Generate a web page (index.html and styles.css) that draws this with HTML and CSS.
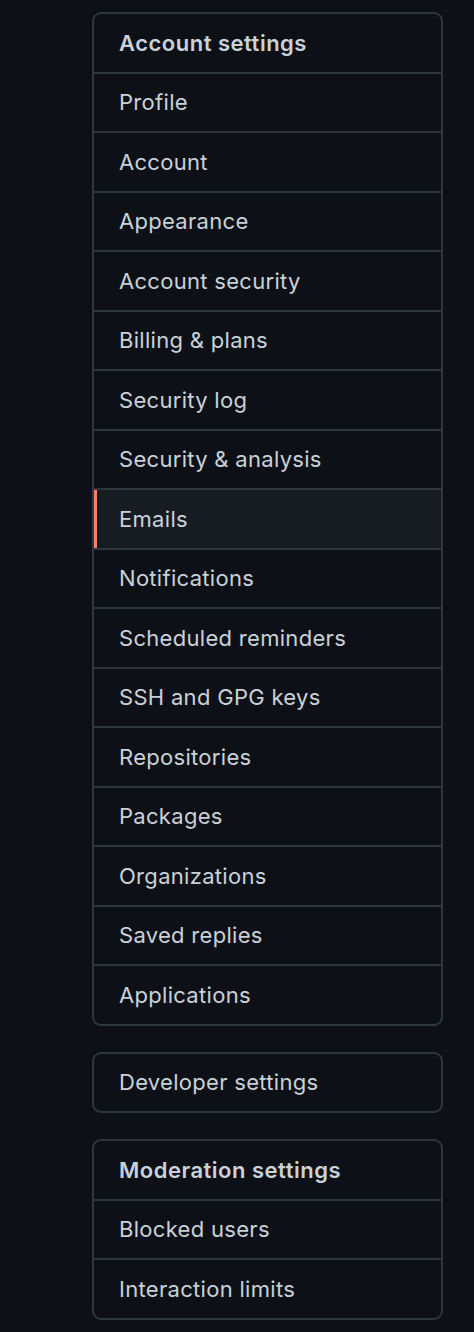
FILE: index.html
```html
<!DOCTYPE html>
<html>
<head>
<meta charset="utf-8">
<link rel="stylesheet" href="styles.css">
</head>
<body>
<div class="sidebar">
  <nav class="menu">
    <div class="menu-heading">Account settings</div>
    <a class="menu-item">Profile</a>
    <a class="menu-item">Account</a>
    <a class="menu-item">Appearance</a>
    <a class="menu-item">Account security</a>
    <a class="menu-item">Billing &amp; plans</a>
    <a class="menu-item">Security log</a>
    <a class="menu-item">Security &amp; analysis</a>
    <a class="menu-item selected">Emails</a>
    <a class="menu-item">Notifications</a>
    <a class="menu-item">Scheduled reminders</a>
    <a class="menu-item">SSH and GPG keys</a>
    <a class="menu-item">Repositories</a>
    <a class="menu-item">Packages</a>
    <a class="menu-item">Organizations</a>
    <a class="menu-item">Saved replies</a>
    <a class="menu-item">Applications</a>
  </nav>
  <nav class="menu">
    <a class="menu-item">Developer settings</a>
  </nav>
  <nav class="menu">
    <div class="menu-heading">Moderation settings</div>
    <a class="menu-item">Blocked users</a>
    <a class="menu-item">Interaction limits</a>
  </nav>
</div>
</body>
</html>
```
FILE: styles.css
```css
html, body {
  margin: 0;
  padding: 0;
  background: #0d1117;
}
body {
  font-family: Inter, "Noto Sans", "Liberation Sans", sans-serif;
  color: #c9d1d9;
}
.sidebar {
  width: 351px;
  margin-left: 92px;
  padding-top: 12px;
  display: flex;
  flex-direction: column;
  gap: 26px;
}
.menu {
  border: 2px solid #30363d;
  border-radius: 9px;
  overflow: hidden;
  display: flex;
  flex-direction: column;
}
.menu-heading,
.menu-item {
  position: relative;
  display: flex;
  align-items: center;
  height: 56.5px;
  padding: 1px 25px 0;
  font-size: 22px;
  line-height: 33px;
  letter-spacing: 0.3px;
  border-top: 2px solid #30363d;
  color: #c9d1d9;
  text-decoration: none;
}
.menu > :first-child {
  border-top: none;
}
.menu-heading {
  font-weight: 600;
  letter-spacing: 0.5px;
}
.menu-item.selected {
  background: #171b22;
}
.menu-item.selected::before {
  content: "";
  position: absolute;
  left: 0;
  top: 0;
  bottom: 0;
  width: 3px;
  background: #f78166;
}
```
